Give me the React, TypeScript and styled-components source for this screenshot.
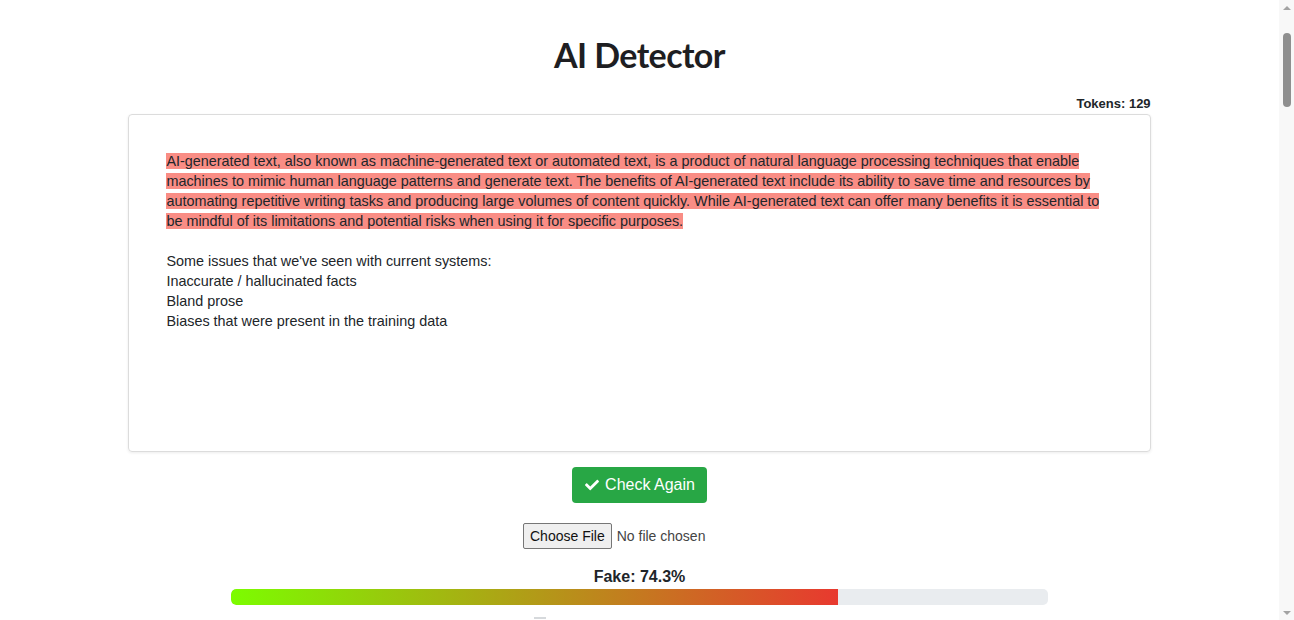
import React from "react";
import styled, { createGlobalStyle } from "styled-components";

const GlobalStyle = createGlobalStyle`
  html, body { margin: 0; padding: 0; background: #fff; height: 100%; overflow: hidden; }
  #root { height: 100%; }
  body {
    font-family: "Liberation Sans", Arial, sans-serif;
    color: #212529;
    font-size: 14px;
  }
  * { box-sizing: border-box; }
`;

const Shell = styled.div`
  display: flex;
  height: 100vh;
`;

const Main = styled.main`
  flex: 1;
  min-width: 0;
  overflow: hidden;
`;

const ScrollRail = styled.div`
  width: 15px;
  flex-shrink: 0;
  background: #f8f8f8;
  display: flex;
  flex-direction: column;
  align-items: center;
`;

const Arrow = styled.div<{ $dir: "up" | "down" }>`
  width: 15px;
  height: 15px;
  display: flex;
  align-items: center;
  justify-content: center;
  &::after {
    content: "";
    width: 0;
    height: 0;
    border-left: 4px solid transparent;
    border-right: 4px solid transparent;
    ${(p) =>
      p.$dir === "up"
        ? "border-bottom: 4px solid #a3a3a3;"
        : "border-top: 4px solid #a3a3a3;"}
  }
`;

const Track = styled.div`
  flex: 1;
  width: 100%;
  display: flex;
  justify-content: center;
  padding-top: 18px;
`;

const Thumb = styled.div`
  width: 8px;
  height: 74px;
  border-radius: 4px;
  background: #8f8f8f;
  margin-left: 1px;
`;

const Page = styled.div`
  width: calc(80% - 1px);
  margin: 0 auto;
  display: flex;
  flex-direction: column;
  align-items: center;
  padding-top: 33px;
`;

const Title = styled.h1`
  margin: 0;
  font-family: Lato, "Open Sans", sans-serif;
  font-weight: 700;
  font-size: 34px;
  line-height: 44px;
  letter-spacing: -0.6px;
  color: #1e1e22;
`;

const TokenCount = styled.div`
  align-self: flex-end;
  margin-top: 19px;
  margin-bottom: 3px;
  font-weight: 700;
  font-size: 13px;
  line-height: 15px;
  color: #212529;
`;

const Editor = styled.div`
  width: 100%;
  height: 338px;
  border: 1px solid #dcdcdc;
  border-radius: 4px;
  box-shadow: 0 1px 3px rgba(0, 0, 0, 0.08);
  padding: 36px 35px 36px 37px;
  font-size: 14.4px;
  line-height: 20px;
  color: #212529;
`;

const Highlight = styled.span<{ $tone: string }>`
  background: ${(p) => p.$tone};
`;

const Line = styled.div`
  min-height: 20px;
`;

const CheckButton = styled.button`
  margin-top: 15px;
  display: inline-flex;
  align-items: center;
  gap: 5px;
  height: 36px;
  padding: 0 12px;
  border: none;
  border-radius: 4px;
  background: #28a745;
  color: #fff;
  font-family: "Liberation Sans", Arial, sans-serif;
  font-size: 16px;
  cursor: pointer;
`;

const FileRow = styled.div`
  margin-top: 20px;
  display: flex;
  justify-content: center;
`;

const FileInput = styled.input`
  font-family: "Liberation Sans", Arial, sans-serif;
  font-size: 14px;
  color: #444;
  width: 233px;
  &::file-selector-button {
    font-family: "Liberation Sans", Arial, sans-serif;
    font-size: 14px;
    color: #111;
    padding: 4px 6px;
    margin-right: 5px;
    background: #efefef;
    border: 1px solid #767676;
    border-radius: 2px;
  }
`;

const ScoreLabel = styled.div`
  margin-top: 18px;
  font-weight: 700;
  font-size: 16px;
  line-height: 20px;
  color: #212529;
`;

const Bar = styled.div`
  margin-top: 2px;
  width: 80%;
  height: 16px;
  background: #e9ecef;
  border-radius: 5px;
  overflow: hidden;
`;

const BarFill = styled.div`
  height: 100%;
  border-radius: 5px 0 0 5px;
`;

const Next = styled.div`
  margin-top: 12px;
  width: 12px;
  height: 2px;
  background: #d6d9dc;
  margin-right: 200px;
`;

const Check = () => (
  <svg width="16" height="14" viewBox="0 0 512 512" fill="#fff" aria-hidden>
    <path d="M173.898 439.404l-166.4-166.4c-9.997-9.997-9.997-26.206 0-36.204l36.203-36.204c9.997-9.998 26.207-9.998 36.204 0L192 312.69 432.095 72.596c9.997-9.997 26.207-9.997 36.204 0l36.203 36.204c9.997 9.997 9.997 26.206 0 36.204l-294.4 294.401c-9.998 9.997-26.207 9.997-36.204-.001z" />
  </svg>
);

const fake = 74.3;

export default function App() {
  const hl = "#f98d85";
  return (
    <>
      <GlobalStyle />
      <Shell>
        <Main>
          <Page>
            <Title>AI Detector</Title>
            <TokenCount>Tokens: 129</TokenCount>
            <Editor>
              <Line>
                <Highlight $tone={hl}>
                  AI-generated text, also known as machine-generated text or automated text, is a product of natural language processing techniques that enable machines to mimic human language patterns and generate text. The benefits of AI-generated text include its ability to save time and resources by automating repetitive writing tasks and producing large volumes of content quickly. While AI-generated text can offer many benefits it is essential to be mindful of its limitations and potential risks when using it for specific purposes.
                </Highlight>
              </Line>
              <Line />
              <Line>Some issues that we've seen with current systems:</Line>
              <Line>Inaccurate / hallucinated facts</Line>
              <Line>Bland prose</Line>
              <Line>Biases that were present in the training data</Line>
            </Editor>
            <CheckButton>
              <Check />
              Check Again
            </CheckButton>
            <FileRow>
              <FileInput type="file" />
            </FileRow>
            <ScoreLabel>Fake: {fake}%</ScoreLabel>
            <Bar>
              <BarFill
                style={{
                  width: `${fake}%`,
                  background: "linear-gradient(to right, #7cfc00, #e8392f)",
                }}
              />
            </Bar>
            <Next />
          </Page>
        </Main>
        <ScrollRail>
          <Arrow $dir="up" />
          <Track>
            <Thumb />
          </Track>
          <Arrow $dir="down" />
        </ScrollRail>
      </Shell>
    </>
  );
}
